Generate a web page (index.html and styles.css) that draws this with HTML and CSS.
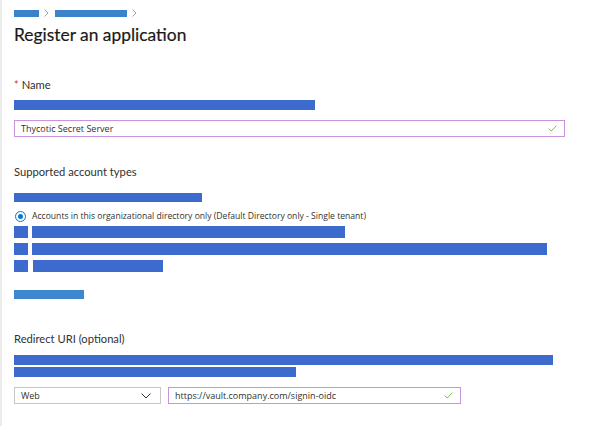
FILE: index.html
```html
<!DOCTYPE html>
<html>
<head>
<meta charset="utf-8">
<link rel="stylesheet" href="styles.css">
</head>
<body>
<div class="page">
  <nav class="crumbs">
    <span class="bar crumb1"></span>
    <svg class="chev" width="5" height="8" viewBox="0 0 5 8"><path d="M0.5 0.5 L4 4 L0.5 7.5" fill="none" stroke="#a19f9d" stroke-width="1"/></svg>
    <span class="bar crumb2"></span>
    <svg class="chev" width="5" height="8" viewBox="0 0 5 8"><path d="M0.5 0.5 L4 4 L0.5 7.5" fill="none" stroke="#a19f9d" stroke-width="1"/></svg>
  </nav>
  <h1 class="title">Register an application</h1>

  <section class="sec-name">
    <div class="label"><span class="req">*</span> Name</div>
    <div class="bar desc1"></div>
    <div class="input full">
      <span>Thycotic Secret Server</span>
      <svg class="check" width="9" height="7" viewBox="0 0 9 7"><path d="M0.5 3.5 L3.2 6 L8.5 0.7" fill="none" stroke="#7dbb4a" stroke-width="1"/></svg>
    </div>
  </section>

  <section class="sec-types">
    <div class="label">Supported account types</div>
    <div class="bar desc2"></div>
    <div class="radio-row">
      <span class="radio"><span class="dot"></span></span>
      <span class="radio-text">Accounts in this organizational directory only (Default Directory only - Single tenant)</span>
    </div>
    <div class="opt-row first"><span class="sq"></span><span class="bar" style="width:313px"></span></div>
    <div class="opt-row"><span class="sq"></span><span class="bar" style="width:515px"></span></div>
    <div class="opt-row"><span class="sq"></span><span class="bar shift" style="width:130px"></span></div>
    <div class="link-bar"></div>
  </section>

  <section class="sec-redirect">
    <div class="label">Redirect URI (optional)</div>
    <div class="bar r1"></div>
    <div class="bar r2"></div>
    <div class="uri-row">
      <div class="select">
        <span>Web</span>
        <svg width="10" height="6" viewBox="0 0 10 6"><path d="M0.5 0.5 L5 5 L9.5 0.5" fill="none" stroke="#323130" stroke-width="1"/></svg>
      </div>
      <div class="input uri">
        <span>https://vault.company.com/signin-oidc</span>
        <svg class="check" width="9" height="7" viewBox="0 0 9 7"><path d="M0.5 3.5 L3.2 6 L8.5 0.7" fill="none" stroke="#7dbb4a" stroke-width="1"/></svg>
      </div>
    </div>
  </section>
</div>
</body>
</html>
```

FILE: styles.css
```css
html, body {
  margin: 0;
  padding: 0;
  background: #ffffff;
}
body {
  font-family: "Open Sans", "Noto Sans", sans-serif;
  color: #323130;
}
.page {
  width: 599px;
  height: 426px;
  box-sizing: border-box;
  border-left: 2px solid #ececec;
  padding: 10px 0 0 12px;
  overflow: hidden;
}
.bar {
  display: block;
  background: #3c6bcd;
}
.crumbs {
  display: flex;
  align-items: center;
  height: 7px;
}
.crumbs .bar {
  height: 7px;
  background: #3b82cc;
}
.crumb1 { width: 25px; }
.crumb2 { width: 72px; }
.chev {
  margin: -2px 6px 0 5px;
}
.title {
  margin: 6px 0 0 0;
  font-family: "Lato", "Open Sans", sans-serif;
  font-size: 17.4px;
  font-weight: 400;
  line-height: 24px;
  color: #1b1a19;
  -webkit-text-stroke: 0.2px #1b1a19;
}
.label {
  font-family: "Lato", "Open Sans", sans-serif;
  font-size: 11.2px;
  line-height: 16px;
  color: #323130;
}
.req { color: #d13438; }
.sec-name { margin-top: 30px; }
.desc1 { width: 301px; height: 10px; margin-top: 7px; }
.input {
  box-sizing: border-box;
  height: 17px;
  border: 1px solid #c994dc;
  display: flex;
  align-items: center;
  justify-content: space-between;
  padding: 0 7px 0 6px;
  font-size: 9px;
  color: #323130;
}
.full { width: 551px; margin-top: 10px; }
.sec-types { margin-top: 27px; }
.desc2 { width: 188px; height: 9px; margin-top: 13px; }
.radio-row {
  display: flex;
  align-items: center;
  margin-top: 8px;
  height: 12px;
}
.radio {
  box-sizing: border-box;
  width: 11px;
  height: 11px;
  border: 1px solid #0078d4;
  border-radius: 50%;
  display: flex;
  align-items: center;
  justify-content: center;
  margin-left: 1px;
}
.dot {
  width: 5px;
  height: 5px;
  border-radius: 50%;
  background: #0078d4;
}
.radio-text {
  margin-left: 6px;
  font-size: 8.6px;
  color: #323130;
}
.opt-row {
  display: flex;
  gap: 4px;
  height: 12px;
  margin-top: 5px;
}
.opt-row.first { margin-top: 4px; }
.opt-row .bar { height: 12px; }
.opt-row .shift { margin-left: 1px; }
.sq {
  width: 14px;
  height: 12px;
  background: #3c6bcd;
}
.link-bar {
  width: 70px;
  height: 9px;
  background: #3d87cf;
  margin-top: 18px;
}
.sec-redirect { margin-top: 32px; }
.r1 { width: 539px; height: 10px; margin-top: 8px; }
.r2 { width: 282px; height: 10px; margin-top: 2px; }
.uri-row {
  display: flex;
  gap: 7px;
  margin-top: 10px;
}
.select {
  box-sizing: border-box;
  width: 147px;
  height: 17px;
  border: 1px solid #c8c6c4;
  display: flex;
  align-items: center;
  justify-content: space-between;
  padding: 0 9px 0 6px;
  font-size: 9px;
}
.uri { width: 293px; }
```
